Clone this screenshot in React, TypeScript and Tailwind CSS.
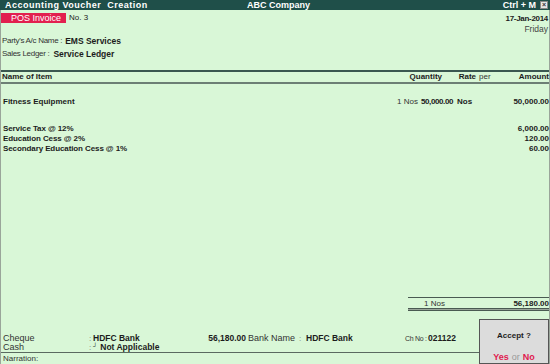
const font = { fontFamily: '"Liberation Sans", Arial, sans-serif' };

const items = [
  { name: "Service Tax @ 12%", amount: "6,000.00" },
  { name: "Education Cess @ 2%", amount: "120.00" },
  { name: "Secondary Education Cess @ 1%", amount: "60.00" },
];

const App = () => {
  return (
    <div
      className="w-[550px] h-[364px] bg-[#d9f7d7] text-[#1c1c1c] text-[8px] leading-[10px] flex flex-col overflow-hidden whitespace-nowrap"
      style={font}
    >
      {/* title bar */}
      <div className="h-[10px] bg-[#1f4f49] text-white font-bold text-[9px] flex items-center pl-[5px] pr-[2px] relative">
        <span className="tracking-[0.5px]">Accounting Voucher&nbsp; Creation</span>
        <span className="absolute left-[247px]">ABC Company</span>
        <span className="ml-auto mr-[4px]">Ctrl + M</span>
        <span className="w-[8px] h-[8px] bg-[#e6e6e6] border border-[#888] text-[#333] text-[7px] leading-[6px] flex items-center justify-center">
          ×
        </span>
      </div>

      <div className="flex-1 flex flex-col border-l border-r border-[#9aa59a]">
        {/* voucher info */}
        <div className="h-[60px] flex justify-between">
          <div className="flex flex-col">
            <div className="flex items-center mt-[3px]">
              <div className="w-[65px] h-[10px] bg-[#e2204f] text-white text-[9px] leading-[10px] pl-[10px]">
                POS Invoice
              </div>
              <span className="ml-[3px]">No. 3</span>
            </div>
            <div className="mt-[13px] pl-[1px] flex items-center">
              <span className="text-[#333] tracking-[-0.3px]">Party's A/c Name :</span>
              <span className="ml-[3px] font-bold text-[8.5px]">EMS Services</span>
            </div>
            <div className="mt-[3px] pl-[1px] flex items-center">
              <span className="text-[#333] tracking-[-0.3px]">Sales Ledger :</span>
              <span className="ml-[4px] font-bold text-[8.5px]">Service Ledger</span>
            </div>
          </div>
          <div className="flex flex-col items-end pr-[1px] mt-[4px]">
            <span className="font-bold tracking-[-0.3px]">17-Jan-2014</span>
            <span className="text-[#444] text-[8.5px]">Friday</span>
          </div>
        </div>

        {/* table header */}
        <div className="border-t-2 border-b-2 border-t-[#3a5750] border-b-[#6d7f75] h-[14px] flex items-center font-bold pl-[1px]">
          <span className="flex-1">Name of Item</span>
          <span className="w-[50px] text-right">Quantity</span>
          <span className="w-[34px] text-right">Rate</span>
          <span className="w-[21px] pl-[3px] font-normal text-[#333]">per</span>
          <span className="w-[52px] text-right">Amount</span>
        </div>

        {/* body */}
        <div className="flex-1 flex flex-col pl-[2px]">
          <div className="flex items-center font-bold mt-[13px]">
            <span className="flex-1">Fitness Equipment</span>
            <span className="font-normal text-[#333]">1 Nos</span>
            <span className="ml-[3px] tracking-[-0.4px]">50,000.00</span>
            <span className="ml-[4px] w-[40px]">Nos</span>
            <span className="w-[52px] text-right">50,000.00</span>
          </div>
          <div className="mt-[17px] flex flex-col font-bold">
            {items.map((it) => (
              <div key={it.name} className="flex">
                <span className="flex-1 tracking-[-0.1px]">{it.name}</span>
                <span className="w-[60px] text-right">{it.amount}</span>
              </div>
            ))}
          </div>

          <div className="mt-auto mb-[8px] ml-auto w-[141px] flex flex-col">
            <div className="border-t border-[#4a5a52] h-[11px] pt-[1px] flex items-center">
              <span className="ml-[16px] text-[#333]">1 Nos</span>
              <span className="ml-auto font-bold">56,180.00</span>
            </div>
            <div className="border-t border-b border-[#4a5a52] h-[3px] bg-[#9aa59a]" />
          </div>
        </div>

        {/* footer */}
        <div className="flex h-[45px]">
          <div className="flex-1 flex flex-col">
            <div className="flex-1 flex flex-col justify-end pl-[2px] text-[9px] leading-[9px]">
              <div className="flex items-center">
                <span className="w-[86px] text-[#333]">Cheque</span>
                <span className="w-[4px] text-[#777] text-[8px]">:</span>
                <span className="w-[111px] font-bold text-[8.5px]">HDFC Bank</span>
                <span className="w-[42px] text-right font-bold text-[8.5px]">56,180.00</span>
                <span className="w-[53px] pl-[2px] text-[#333]">Bank Name</span>
                <span className="w-[7px] text-[#777] text-[8px]">:</span>
                <span className="w-[99px] font-bold text-[8.5px]">HDFC Bank</span>
                <span className="w-[23px] text-[#333] text-[7px] tracking-[-0.3px]">Ch No :</span>
                <span className="font-bold text-[8.5px]">021122</span>
              </div>
              <div className="flex items-center">
                <span className="w-[86px] text-[#333]">Cash</span>
                <span className="w-[4px] text-[#777] text-[8px]">:</span>
                <span className="text-[6px] leading-[6px] self-start">┘</span>
                <span className="ml-[3px] font-bold text-[8.5px]">Not Applicable</span>
              </div>
            </div>
            <div className="h-[12px] border-t border-[#5a6a60] flex items-center pl-[2px] text-[#333]">
              Narration:
            </div>
          </div>
          <div
            className="w-[70px] bg-[#dcdcdc] border border-[#555] flex flex-col items-center justify-between pt-[11px] pb-[1px]"
            style={{
              backgroundImage: "radial-gradient(#b8c8b8 0.6px, transparent 0.7px)",
              backgroundSize: "4px 4px",
            }}
          >
            <span className="font-bold">Accept ?</span>
            <span className="text-[9px]">
              <span className="font-bold text-[#e0204f]">Yes</span>
              <span className="text-[#999] mx-[3px]">or</span>
              <span className="font-bold text-[#e0204f]">No</span>
            </span>
          </div>
        </div>
      </div>
    </div>
  );
};

export default App;
